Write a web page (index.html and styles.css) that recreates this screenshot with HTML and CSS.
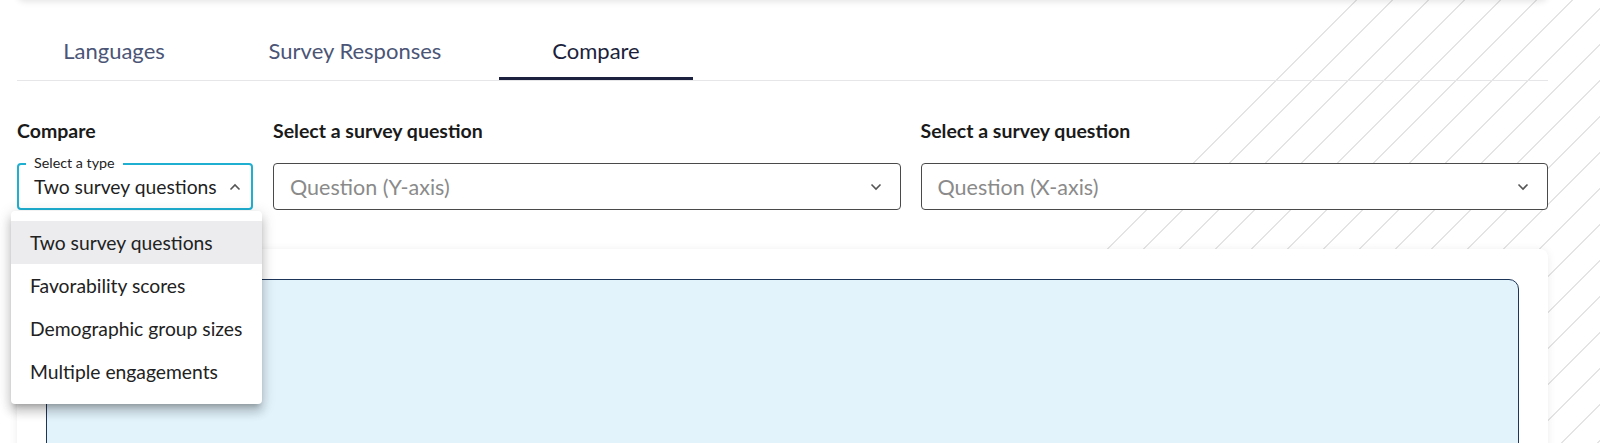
FILE: index.html
```html
<!DOCTYPE html>
<html lang="en">
<head>
  <meta charset="UTF-8">
  <title>Compare</title>
  <link rel="stylesheet" href="styles.css">
</head>
<body>
  <div class="page">
    <div class="topcard"></div>

    <div class="tabs">
      <div class="tab">Languages</div>
      <div class="tab">Survey Responses</div>
      <div class="tab active">Compare</div>
    </div>

    <div class="filters">
      <div class="field">
        <div class="label">Compare</div>
        <div class="select-wrap">
          <div class="select focused">
            <span class="float-label">Select a type</span>
            <span class="value">Two survey questions</span>
            <svg class="chev" width="12" height="8" viewBox="0 0 12 8"><polyline points="1.5,6.5 6,2 10.5,6.5" fill="none" stroke="#555" stroke-width="1.6"/></svg>
          </div>
          <ul class="menu">
            <li class="selected">Two survey questions</li>
            <li>Favorability scores</li>
            <li>Demographic group sizes</li>
            <li>Multiple engagements</li>
          </ul>
        </div>
      </div>

      <div class="field">
        <div class="label">Select a survey question</div>
        <div class="select">
          <span class="placeholder">Question (Y-axis)</span>
          <svg class="chev" width="12" height="8" viewBox="0 0 12 8"><polyline points="1.5,1.5 6,6 10.5,1.5" fill="none" stroke="#555" stroke-width="1.6"/></svg>
        </div>
      </div>

      <div class="field">
        <div class="label">Select a survey question</div>
        <div class="select">
          <span class="placeholder">Question (X-axis)</span>
          <svg class="chev" width="12" height="8" viewBox="0 0 12 8"><polyline points="1.5,1.5 6,6 10.5,1.5" fill="none" stroke="#555" stroke-width="1.6"/></svg>
        </div>
      </div>
    </div>

    <div class="card">
      <div class="chart"></div>
    </div>
  </div>
</body>
</html>
```

FILE: styles.css
```css
html, body { margin: 0; height: 100%; }
body { font-family: Lato, "Open Sans", sans-serif; color: #1a1a1a; }

.page {
  height: 100vh;
  overflow: hidden;
  box-sizing: border-box;
  padding: 0 52px 0 17px;
  background:
    linear-gradient(135deg, #fff 957px, transparent 957px),
    repeating-linear-gradient(135deg, transparent 0 16.3px, #e4e4e4 16.3px 17.9px, transparent 17.9px 25.456px),
    #fff;
}

.topcard {
  height: 12px;
  margin-top: -12px;
  background: #fff;
  border-radius: 0 0 8px 8px;
  box-shadow: 0 2px 6px rgba(0, 0, 0, 0.1);
}

.tabs { display: flex; gap: 47px; border-bottom: 1px solid #e6e6e8; }
.tab {
  width: 194px; height: 56px; margin-top: 24px; padding-bottom: 3px; box-sizing: border-box;
  display: flex; align-items: center; justify-content: center;
  font-size: 22px; color: #4b5576;
}
.tab.active { color: #1c1f3b; box-shadow: inset 0 -3px 0 #1c2140; }

.filters {
  display: grid;
  grid-template-columns: 236px 1fr 1fr;
  column-gap: 20px;
  margin-top: 38px;
}
.label { font-size: 19.5px; line-height: 23px; font-weight: 700; margin-bottom: 21px; }

.select-wrap { position: relative; }
.select {
  position: relative;
  height: 47px; box-sizing: border-box;
  display: flex; align-items: center; justify-content: space-between;
  padding: 0 18px 0 16px;
  border: 1px solid #4a4a4a; border-radius: 4px;
  background: #fff;
  font-size: 19.3px;
}
.select.focused { border: 2px solid #1eafd1; padding: 0 10px 0 15px; }
.placeholder { color: #8a8a8a; font-size: 21.5px; }
.value { color: #1f1f1f; }
.chev { display: block; }

.float-label {
  position: absolute; top: -10px; left: 7px;
  padding: 0 8px 0 8px;
  background: #fff;
  font-size: 14.3px; line-height: 15px; color: #222;
}

.menu {
  position: absolute; top: calc(100% + 1px); left: -6px; z-index: 10;
  width: 251px; box-sizing: border-box;
  margin: 0; padding: 10px 0 11px; list-style: none;
  background: #fff; border-radius: 4px;
  box-shadow: 0 5px 5px -3px rgba(0,0,0,0.2), 0 8px 10px 1px rgba(0,0,0,0.14), 0 3px 14px 2px rgba(0,0,0,0.12);
}
.menu li { height: 43px; display: flex; align-items: center; padding-left: 19px; font-size: 19.3px; color: #222; }
.menu li.selected { background: #ececee; }

.card {
  margin-top: 39px;
  background: #fff;
  border-radius: 8px;
  box-shadow: 0 1px 8px rgba(0, 0, 0, 0.08);
  padding: 30px 29px;
}
.chart {
  height: 300px;
  background: #e2f3fc;
  border: 1px solid #1d3559;
  border-radius: 10px;
}
```
